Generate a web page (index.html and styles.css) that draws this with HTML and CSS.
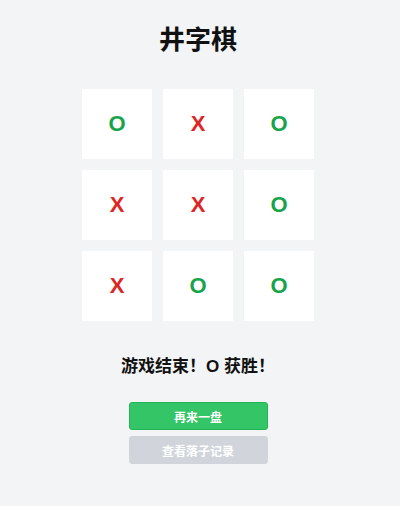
FILE: index.html
```html
<!DOCTYPE html>
<html lang="zh-CN">
<head>
<meta charset="utf-8">
<title>井字棋</title>
<link rel="stylesheet" href="styles.css">
</head>
<body>
<main class="app">
  <h1 class="title">井字棋</h1>
  <div class="board">
    <div class="cell o">O</div>
    <div class="cell x">X</div>
    <div class="cell o">O</div>
    <div class="cell x">X</div>
    <div class="cell x">X</div>
    <div class="cell o">O</div>
    <div class="cell x">X</div>
    <div class="cell o">O</div>
    <div class="cell o">O</div>
  </div>
  <p class="status">游戏结束！O 获胜！</p>
  <div class="actions">
    <button class="btn btn-primary">再来一盘</button>
    <button class="btn btn-muted">查看落子记录</button>
  </div>
</main>
</body>
</html>
```
FILE: styles.css
```css
html, body {
  margin: 0;
  padding: 0;
  background: #f3f4f6;
}
body {
  font-family: "Liberation Sans", "Noto Sans CJK SC", sans-serif;
  color: #111827;
}
.app {
  width: 396px;
  display: flex;
  flex-direction: column;
  align-items: center;
  padding-top: 22px;
}
.title {
  margin: 0;
  font-size: 26px;
  line-height: 36px;
  font-weight: 700;
  color: #111;
}
.board {
  margin-top: 31px;
  display: grid;
  grid-template-columns: repeat(3, 70px);
  grid-auto-rows: 70px;
  gap: 11px;
}
.cell {
  background: #fff;
  display: flex;
  align-items: center;
  justify-content: center;
  font-size: 22px;
  font-weight: 700;
}
.cell.o { color: #16a34a; }
.cell.x { color: #dc2626; }
.status {
  margin: 34px 0 0;
  font-size: 17px;
  line-height: 24px;
  font-weight: 700;
  color: #111;
}
.actions {
  margin-top: 23px;
  display: flex;
  flex-direction: column;
  gap: 6px;
}
.btn {
  width: 139px;
  height: 28px;
  border-radius: 3px;
  font-family: inherit;
  font-size: 12px;
  font-weight: 700;
  color: #fff;
  padding: 0;
  cursor: pointer;
}
.btn-primary {
  background: #34c566;
  border: 1px solid #22b455;
}
.btn-muted {
  background: #d1d5db;
  border: 1px solid #d1d5db;
}
```
